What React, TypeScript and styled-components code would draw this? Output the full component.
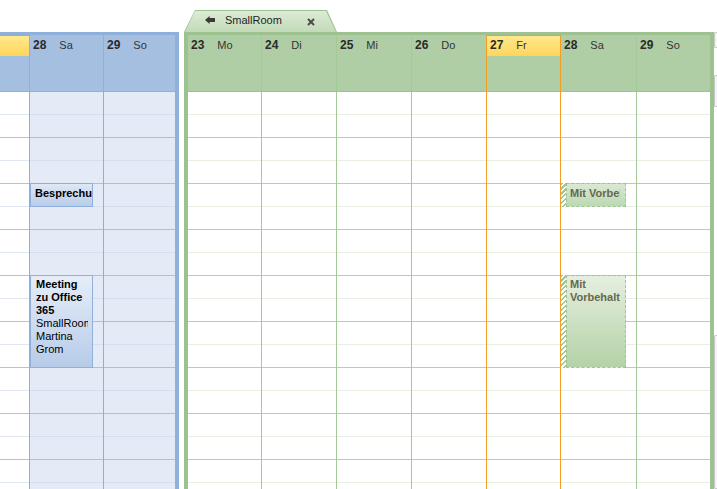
import React from "react";
import styled, { createGlobalStyle } from "styled-components";

type Tone = "blue" | "green";

const ORANGE = "#f2a025";

const palette = {
  blue: {
    frame: "#8eb0da",
    header: "#a5bfe1",
    sep: "#8eaedb",
    shade: "#e4ebf6",
    hour: "#a8c0e2",
    half: "#d3deef",
    plainHour: "#b0c4e2",
    plainHalf: "#e1e7f0",
  },
  green: {
    frame: "#9dc28f",
    header: "#b0cea5",
    sep: "#a5c898",
    shade: "#ffffff",
    hour: "#b4d1a9",
    half: "#e6efe2",
    plainHour: "#b4d1a9",
    plainHalf: "#e6efe2",
  },
};

type EventKind = "busy" | "tentative";

interface CalEvent {
  kind: EventKind;
  slot: number;
  span: number;
  subject: string;
  details?: string[];
}

interface Day {
  num: number;
  name: string;
  width: number;
  shaded?: boolean;
  today?: boolean;
  edge?: string;
  events?: CalEvent[];
}

const SLOT_H = 23;
const SLOT_COUNT = 18;

const blueDays: Day[] = [
  { num: 27, name: "Fr", width: 75, today: true, edge: ORANGE },
  {
    num: 28,
    name: "Sa",
    width: 74,
    shaded: true,
    edge: palette.blue.sep,
    events: [
      { kind: "busy", slot: 4, span: 1, subject: "Besprechung" },
      {
        kind: "busy",
        slot: 8,
        span: 4,
        subject: "Meeting zu Office 365",
        details: ["SmallRoom", "Martina Grom"],
      },
    ],
  },
  { num: 29, name: "So", width: 71, shaded: true },
];

const greenDays: Day[] = [
  { num: 23, name: "Mo", width: 74, edge: palette.green.sep },
  { num: 24, name: "Di", width: 75, edge: palette.green.sep },
  { num: 25, name: "Mi", width: 75, edge: palette.green.sep },
  { num: 26, name: "Do", width: 75, edge: ORANGE },
  { num: 27, name: "Fr", width: 74, today: true, edge: ORANGE },
  {
    num: 28,
    name: "Sa",
    width: 76,
    edge: palette.green.sep,
    events: [
      { kind: "tentative", slot: 4, span: 1, subject: "Mit Vorbehalt" },
      { kind: "tentative", slot: 8, span: 4, subject: "Mit Vorbehalt" },
    ],
  },
  { num: 29, name: "So", width: 73 },
];

const GlobalStyle = createGlobalStyle`
  html, body {
    margin: 0;
    padding: 0;
    background: #ffffff;
    overflow: hidden;
  }
  body {
    font-family: "Liberation Sans", Arial, sans-serif;
    font-size: 11px;
    color: #222222;
  }
`;

const Page = styled.div`
  display: flex;
  align-items: stretch;
  width: 717px;
  height: 489px;
  overflow: hidden;
`;

const Panel = styled.section<{ $tone: Tone }>`
  flex: none;
  display: flex;
  overflow: hidden;
  border-top: 3px solid ${(p) => palette[p.$tone].frame};
  border-right: 4px solid ${(p) => palette[p.$tone].frame};
`;

const BluePanel = styled(Panel)`
  margin: 32px 5px 0 -45px;
`;

const GreenSection = styled.div`
  flex: none;
  display: flex;
  flex-direction: column;
  width: 530px;
`;

const GreenPanel = styled(Panel)`
  flex: 1;
  min-height: 0;
  border-left: 4px solid ${palette.green.frame};
`;

const Tab = styled.div`
  flex: none;
  box-sizing: border-box;
  width: 153px;
  height: 22px;
  margin-top: 10px;
  padding: 1px 1px 0 1px;
  background: ${palette.green.frame};
  clip-path: polygon(11px 0, calc(100% - 10px) 0, 100% 100%, 0 100%);
`;

const TabFace = styled.div`
  box-sizing: border-box;
  height: 100%;
  display: flex;
  align-items: center;
  padding: 0 21px 3px 20px;
  background: linear-gradient(#dcebd5, #c3dab8);
  clip-path: polygon(10px 0, calc(100% - 10px) 0, 100% 100%, 0 100%);
`;

const TabTitle = styled.span`
  margin-left: 10px;
  font-size: 11px;
  line-height: 13px;
  color: #1e1e1e;
`;

const TabClose = styled.span`
  margin-left: auto;
  display: flex;
  padding-top: 3px;
`;

const DayColumn = styled.div<{ $width: number; $edge?: string }>`
  flex: none;
  box-sizing: border-box;
  width: ${(p) => p.$width}px;
  display: flex;
  flex-direction: column;
  border-right: ${(p) => (p.$edge ? `1px solid ${p.$edge}` : "0")};
`;

const HeaderCell = styled.div<{ $tone: Tone }>`
  flex: none;
  box-sizing: border-box;
  height: 57px;
  background: ${(p) => palette[p.$tone].header};
  border-bottom: 1px solid ${(p) => palette[p.$tone].frame};
`;

const HeaderBand = styled.div<{ $today?: boolean }>`
  box-sizing: border-box;
  height: 21px;
  display: flex;
  align-items: baseline;
  gap: 13px;
  padding: 2px 0 0 3px;
  border-top: 1px solid ${(p) => (p.$today ? ORANGE : "transparent")};
  background: ${(p) =>
    p.$today ? "linear-gradient(#ffe88c, #ffd55c)" : "transparent"};
  color: #2a2a2a;
  white-space: nowrap;
`;

const DayNum = styled.span`
  font-size: 12px;
  font-weight: 700;
  line-height: 14px;
`;

const DayName = styled.span`
  font-size: 11px;
  line-height: 14px;
  color: #333333;
`;

const SlotArea = styled.div<{ $bg: string }>`
  position: relative;
  flex: 1;
  min-height: 0;
  background: ${(p) => p.$bg};
`;

const Slot = styled.div<{ $line: string }>`
  box-sizing: border-box;
  height: ${SLOT_H}px;
  border-bottom: 1px solid ${(p) => p.$line};
`;

const BusyEvent = styled.div<{ $top: number; $height: number; $tall: boolean }>`
  position: absolute;
  left: 0;
  top: ${(p) => p.$top}px;
  box-sizing: border-box;
  width: 63px;
  height: ${(p) => p.$height}px;
  border: 1px solid #8db0dc;
  background: ${(p) =>
    p.$tall
      ? "linear-gradient(#e6edf8, #b7cce9)"
      : "linear-gradient(#dfe8f5, #b8cce9)"};
  padding: ${(p) => (p.$tall ? "2px 4px 0 5px" : "3px 0 0 4px")};
  color: #000000;
`;

const EventText = styled.div`
  height: 100%;
  min-width: 0;
  overflow: hidden;
  font-size: 11px;
  line-height: 13px;
`;

const Subject = styled.div<{ $wrap: boolean }>`
  font-weight: 700;
  white-space: ${(p) => (p.$wrap ? "normal" : "nowrap")};
`;

const Detail = styled.div`
  font-weight: 400;
`;

const TentativeEvent = styled.div<{ $top: number; $height: number }>`
  position: absolute;
  left: 0;
  top: ${(p) => p.$top}px;
  width: 65px;
  height: ${(p) => p.$height}px;
  display: flex;
`;

const Hatch = styled.div`
  flex: none;
  width: 5px;
  background: repeating-linear-gradient(
    135deg,
    #a3c696 0 1.5px,
    #ffffff 1.5px 3.5px
  );
`;

const TentativeBody = styled.div<{ $tall: boolean }>`
  flex: 1;
  min-width: 0;
  box-sizing: border-box;
  border: 1px dashed #9fc493;
  background: ${(p) =>
    p.$tall
      ? "linear-gradient(#e5efdf, #b4d2a7)"
      : "linear-gradient(#d9e9d2, #bcd8b1)"};
  padding: ${(p) => (p.$tall ? "2px 3px 0 3px" : "3px 5px 0 3px")};
  color: #67674f;
`;

const RightStrip = styled.div`
  flex: none;
  width: 3px;
  display: flex;
  flex-direction: column;
`;

const StripPiece = styled.div<{ $mt: number; $h?: number }>`
  flex: ${(p) => (p.$h ? "none" : "1")};
  margin-top: ${(p) => p.$mt}px;
  height: ${(p) => (p.$h ? `${p.$h}px` : "auto")};
  box-sizing: border-box;
  border: 1px solid #c8c8c8;
  border-right: 0;
  border-radius: 2px 0 0 2px;
  background: #f5f5f5;
`;

const BackArrow = () => (
  <svg width="10" height="8" viewBox="0 0 10 8" aria-hidden="true">
    <path d="M0 4 L4.6 0 V2 H10 V6 H4.6 V8 Z" fill="#3a3a3a" />
  </svg>
);

const CloseIcon = () => (
  <svg width="8" height="8" viewBox="0 0 8 8" aria-hidden="true">
    <path d="M1 1 L7 7 M7 1 L1 7" stroke="#4c4c4c" strokeWidth="2" />
  </svg>
);

const EventBlock: React.FC<{ ev: CalEvent }> = ({ ev }) => {
  const top = ev.slot * SLOT_H - 1;
  const height = ev.span * SLOT_H + 1;
  const tall = ev.span > 1;
  if (ev.kind === "busy") {
    return (
      <BusyEvent $top={top} $height={height} $tall={tall}>
        <EventText>
          <Subject $wrap={tall}>{ev.subject}</Subject>
          {ev.details?.map((d) => (
            <Detail key={d}>{d}</Detail>
          ))}
        </EventText>
      </BusyEvent>
    );
  }
  return (
    <TentativeEvent $top={top} $height={height}>
      <Hatch />
      <TentativeBody $tall={tall}>
        <EventText>
          <Subject $wrap={tall}>{ev.subject}</Subject>
        </EventText>
      </TentativeBody>
    </TentativeEvent>
  );
};

const DayView: React.FC<{ day: Day; tone: Tone }> = ({ day, tone }) => {
  const pal = palette[tone];
  const bg = day.shaded ? pal.shade : "#ffffff";
  const hour = day.shaded ? pal.hour : pal.plainHour;
  const half = day.shaded ? pal.half : pal.plainHalf;
  return (
    <DayColumn $width={day.width} $edge={day.edge}>
      <HeaderCell $tone={tone}>
        <HeaderBand $today={day.today}>
          <DayNum>{day.num}</DayNum>
          <DayName>{day.name}</DayName>
        </HeaderBand>
      </HeaderCell>
      <SlotArea $bg={bg}>
        {Array.from({ length: SLOT_COUNT }, (_, i) => (
          <Slot key={i} $line={i % 2 === 1 ? hour : half} />
        ))}
        {day.events?.map((ev, i) => (
          <EventBlock key={i} ev={ev} />
        ))}
      </SlotArea>
    </DayColumn>
  );
};

export default function App() {
  return (
    <>
      <GlobalStyle />
      <Page>
        <BluePanel $tone="blue">
          {blueDays.map((d) => (
            <DayView key={d.num} day={d} tone="blue" />
          ))}
        </BluePanel>
        <GreenSection>
          <Tab>
            <TabFace>
              <BackArrow />
              <TabTitle>SmallRoom</TabTitle>
              <TabClose>
                <CloseIcon />
              </TabClose>
            </TabFace>
          </Tab>
          <GreenPanel $tone="green">
            {greenDays.map((d) => (
              <DayView key={d.num} day={d} tone="green" />
            ))}
          </GreenPanel>
        </GreenSection>
        <RightStrip>
          <StripPiece $mt={32} $h={16} />
          <StripPiece $mt={27} $h={32} />
          <StripPiece $mt={228} />
        </RightStrip>
      </Page>
    </>
  );
}
